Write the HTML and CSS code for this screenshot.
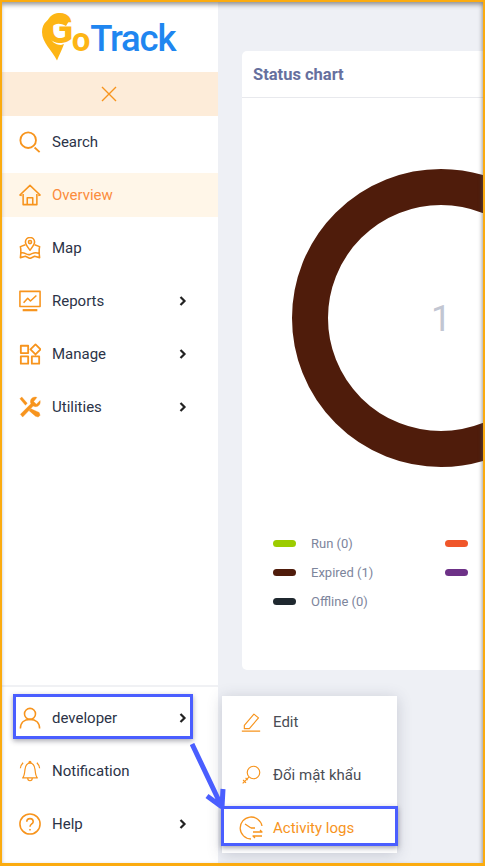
FILE: index.html
```html
<!DOCTYPE html>
<html lang="en">
<head>
<meta charset="utf-8">
<title>GoTrack</title>
<link rel="stylesheet" href="styles.css">
</head>
<body>
<div class="frame">
  <aside class="sidebar">
    <div class="logo">
      <svg class="logo-pin" viewBox="0 0 28 44"><path fill="#fdb515" d="M15 43.500C10 33 0 26 0 15 0 6 7 0 15 0c5 0 9 1 12 4l-3 5C15 4 8 8 8 17c0 7 5 11 11 11l3-1c-2 6-5 11-7 16.500z"/></svg>
      <span class="logo-g">G</span><span class="logo-o">o</span><span class="logo-t">Track</span>
    </div>
    <div class="closebar"><svg class="close" viewBox="0 0 16 16"><path d="M1 1l14 14M15 1L1 15"/></svg></div>
    <nav class="nav">
      <a class="item"><svg class="ic ic-mid" viewBox="0 0 24 24"><circle cx="10" cy="10" r="8.500"/><path d="M17 18l5.500 5"/></svg><span>Search</span></a>
      <a class="item active"><svg class="ic" viewBox="0 0 24 24"><path d="M3 12.500l-2-.5L12 1.500 23 12l-2 .5M4.500 11v11.500h15V11M9 22.500V15h6v7.500"/></svg><span>Overview</span></a>
      <a class="item"><svg class="ic" viewBox="0 0 24 24"><path d="M12 14.500C9 10.500 7 8 7 5.500a5 5 0 0 1 10 0c0 2.500-2 5-5 9z"/><circle cx="12" cy="5.500" r="1.700"/><path d="M7 8.500L1.500 10.500c1 4 .5 8 0 12l5.500-1.500 5 2.500 5-2.500 5.500 1.500c-.5-4-1-8 0-12L17 8.500M2 17.500c4-2 6 3 10 1.500s5-3 10-1"/></svg><span>Map</span></a>
      <a class="item"><svg class="ic" viewBox="0 0 24 24"><path d="M1 1.500h22v16.500H1z"/><path class="bar" d="M4 22h16"/><path d="M5 14l4.500-5 3 3L19 6"/></svg><span>Reports</span><svg class="chev" viewBox="0 0 8 10"><path d="M1.500 1l4 4-4 4"/></svg></a>
      <a class="item"><svg class="ic ic-mid" viewBox="0 0 24 24"><path d="M2 3h8v8H2zM2 14.500h8v8H2zM14 14.500h8v8h-8zM18 1.500l5.500 5.500-5.500 5.500L12.500 7z"/></svg><span>Manage</span><svg class="chev" viewBox="0 0 8 10"><path d="M1.500 1l4 4-4 4"/></svg></a>
      <a class="item"><svg class="ic" viewBox="0 0 24 24"><path class="fill" d="M3 1L1 3l6 7 2-2zM13 14l-2 2 7 6 3 1 2-2-1-3z"/><path class="fill" d="M23 5l-4 4-3-3 3.500-4.500C15 0 11 4 13 8.500L1.500 20 4 23 15.500 11C20 13 24 10 23 5z"/></svg><span>Utilities</span><svg class="chev" viewBox="0 0 8 10"><path d="M1.500 1l4 4-4 4"/></svg></a>
    </nav>
    <div class="nav nav-bottom">
      <a class="item"><svg class="ic" viewBox="0 0 24 24"><circle cx="12" cy="7.500" r="6"/><path d="M1.500 23.500c0-6.500 4-10 10.500-10s10.500 3.500 10.500 10"/></svg><span>developer</span><svg class="chev" viewBox="0 0 8 10"><path d="M1.500 1l4 4-4 4"/></svg></a>
      <a class="item"><svg class="ic ic-thin" viewBox="0 0 24 24"><path d="M4 19.500c2-2 2-5 2.500-9S9 3.500 12 3.500s5 3 5.500 7 .5 7 2.500 9zM9.500 20c0 3.500 5 3.500 5 0M11 3c0-2 2-2 2 0M1.500 9c0-2 1-4 3-6M22.500 9c0-2-1-4-3-6"/></svg><span>Notification</span></a>
      <a class="item"><svg class="ic" viewBox="0 0 24 24"><circle cx="12" cy="12" r="11"/><path d="M8.500 9.500c0-4.500 7-4.500 7 0 0 2.500-3.500 2.500-3.500 5.500M12 17.500v1.500"/></svg><span>Help</span><svg class="chev" viewBox="0 0 8 10"><path d="M1.500 1l4 4-4 4"/></svg></a>
    </div>
  </aside>
  <main class="main">
    <section class="card">
      <h2 class="card-title">Status chart</h2>
      <div class="donut"><span class="donut-value">1</span></div>
      <ul class="legend">
        <li class="legend-item"><i class="swatch run"></i>Run (0)</li>
        <li class="legend-item"><i class="swatch stop"></i></li>
        <li class="legend-item"><i class="swatch expired"></i>Expired (1)</li>
        <li class="legend-item"><i class="swatch idle"></i></li>
        <li class="legend-item"><i class="swatch offline"></i>Offline (0)</li>
      </ul>
    </section>
  </main>
  <div class="menu">
    <a class="menu-item"><svg class="ic ic-menu" viewBox="0 0 24 24"><path d="M4 16L15.500 2.500l5.500 4.500L10 20H4zM1 23h22"/></svg><span>Edit</span></a>
    <a class="menu-item"><svg class="ic ic-menu" viewBox="0 0 24 24"><circle cx="15" cy="9" r="7.500"/><path d="M9.500 14.500L2 22M2.500 18l3.500 3.500M5.500 15.500l2.500 2.500"/></svg><span>Đổi mật khẩu</span></a>
    <a class="menu-item current"><svg class="ic ic-log" viewBox="0 0 24 24"><path d="M23 10A11 11 0 1 0 12 23M12 12L6 8M12 12h4M14 16h9l-2-2M23 20h-9l2 2"/></svg><span>Activity logs</span></a>
  </div>
  <div class="mark mark-user"></div>
  <div class="mark mark-log"></div>
  <svg class="arrow" viewBox="0 0 40 70"><path d="M2 1l29 61M32 64L17 53M32 64l1-18"/></svg>
</div>
</body>
</html>
```

FILE: styles.css
```css
* { box-sizing: border-box; }
html, body { margin: 0; padding: 0; }
body { font-family: Roboto, "Liberation Sans", sans-serif; color: #2b3347; }
.frame {
  position: relative;
  width: 485px;
  height: 866px;
  display: flex;
  overflow: hidden;
  border: solid #fbab0f;
  border-width: 2px 2px 3px 2px;
  background: #eef0f5;
}
.frame::after {
  content: "";
  position: absolute;
  inset: 0;
  box-shadow: inset 0 4px 4px -1px rgba(90, 90, 90, .55), inset -3px 0 4px -2px rgba(90, 90, 90, .4);
  pointer-events: none;
}
.sidebar {
  width: 216px;
  flex: none;
  background: #fff;
  display: flex;
  flex-direction: column;
}
.logo {
  position: relative;
  height: 70px;
  padding: 16px 0 0 43px;
  display: flex;
  align-items: baseline;
  font-weight: 700;
  line-height: 38px;
}
.logo-pin { position: absolute; left: 40px; top: 15px; width: 28px; height: 44px; }
.logo-g { position: relative; top: -8px; color: #fdb515; font-size: 42px; }
.logo-o { color: #fdb515; font-size: 33px; margin-left: -2px; }
.logo-t { color: #1f86f0; font-weight: 500; font-size: 36.500px; letter-spacing: -1.200px; }
.closebar { height: 44px; background: #fdecd9; display: flex; align-items: center; justify-content: center; padding-right: 2px; }
.close { width: 16px; height: 16px; fill: none; stroke: #f7941d; stroke-width: 1.400; }
.nav { display: flex; flex-direction: column; gap: 9px; padding-top: 4px; }
.nav-bottom { margin-top: auto; padding: 9px 0 17px; border-top: 2px solid #f0f1f4; }
.item { height: 44px; display: flex; align-items: center; padding-left: 17px; font-size: 15px; color: #2b3347; }
.item span { flex: 1; margin-left: 11px; }
.active { background: #fff6e8; color: #fb8c3c; }
.ic { width: 22px; height: 22px; flex: none; fill: none; stroke: #f7941d; stroke-width: 1.700; stroke-linejoin: round; }
.ic-mid { stroke-width: 2; }
.ic-thin { stroke-width: 1.300; }
.ic .fill { fill: #f7941d; stroke-width: .4; }
.ic .bar { stroke-width: 2.400; }
.chev { width: 8px; height: 10px; margin-right: 31px; fill: none; stroke: #222; stroke-width: 2.200; }
.main { flex: 1; min-width: 0; padding: 49px 0 0 24px; }
.card { width: 300px; height: 619px; background: #fff; border-radius: 5px 0 0 5px; }
.card-title { margin: 0; height: 47px; padding: 0 11px; border-bottom: 1px solid #e8e9ed; font-size: 16.500px; line-height: 47px; font-weight: 700; color: #66709e; }
.donut {
  width: 298px;
  height: 298px;
  margin: 71px 0 0 50px;
  border: 36px solid #4f1c0b;
  border-radius: 50%;
  display: flex;
  align-items: center;
  justify-content: center;
}
.donut-value { font-size: 36px; font-weight: 400; color: #c2c6d2; position: relative; top: 1px; }
.legend {
  list-style: none;
  margin: 62px 0 0 31px;
  padding: 0;
  display: grid;
  grid-template-columns: 172px 172px;
  grid-auto-rows: 29px;
}
.legend-item { display: flex; align-items: center; height: 29px; font-size: 13px; color: #7d859c; }
.swatch { width: 23px; height: 7px; border-radius: 4px; margin-right: 15px; }
.run { background: #9ccc00; }
.stop { background: #f0562a; }
.expired { background: #4f1c0b; }
.idle { background: #6d3187; }
.offline { background: #1f282f; }
.menu {
  position: absolute;
  left: 220px;
  top: 694px;
  width: 175px;
  height: 157px;
  background: #fff;
  box-shadow: 0 2px 14px rgba(60, 65, 90, .22);
  padding-top: 4px;
}
.menu-item { height: 44px; margin-bottom: 9px; display: flex; align-items: center; padding-left: 19px; font-size: 15px; color: #4a4d55; }
.menu-item span { margin-left: 12px; }
.current { color: #f7941d; }
.ic-menu { stroke-width: 1.400; width: 20px; height: 20px; }
.ic-log { stroke-width: 1.300; width: 24px; height: 24px; margin-left: -2px; }
.menu-item.current span { margin-left: 10px; }
.mark { position: absolute; border: 3px solid #4a5eff; box-shadow: 0 2px 5px rgba(40, 40, 60, .4); }
.mark-user { left: 11px; top: 692px; width: 180px; height: 45px; }
.mark-log { left: 219px; top: 804px; width: 177px; height: 40px; }
.arrow { position: absolute; left: 188px; top: 741px; width: 40px; height: 70px; fill: none; stroke: #4a5eff; stroke-width: 5; }
```
